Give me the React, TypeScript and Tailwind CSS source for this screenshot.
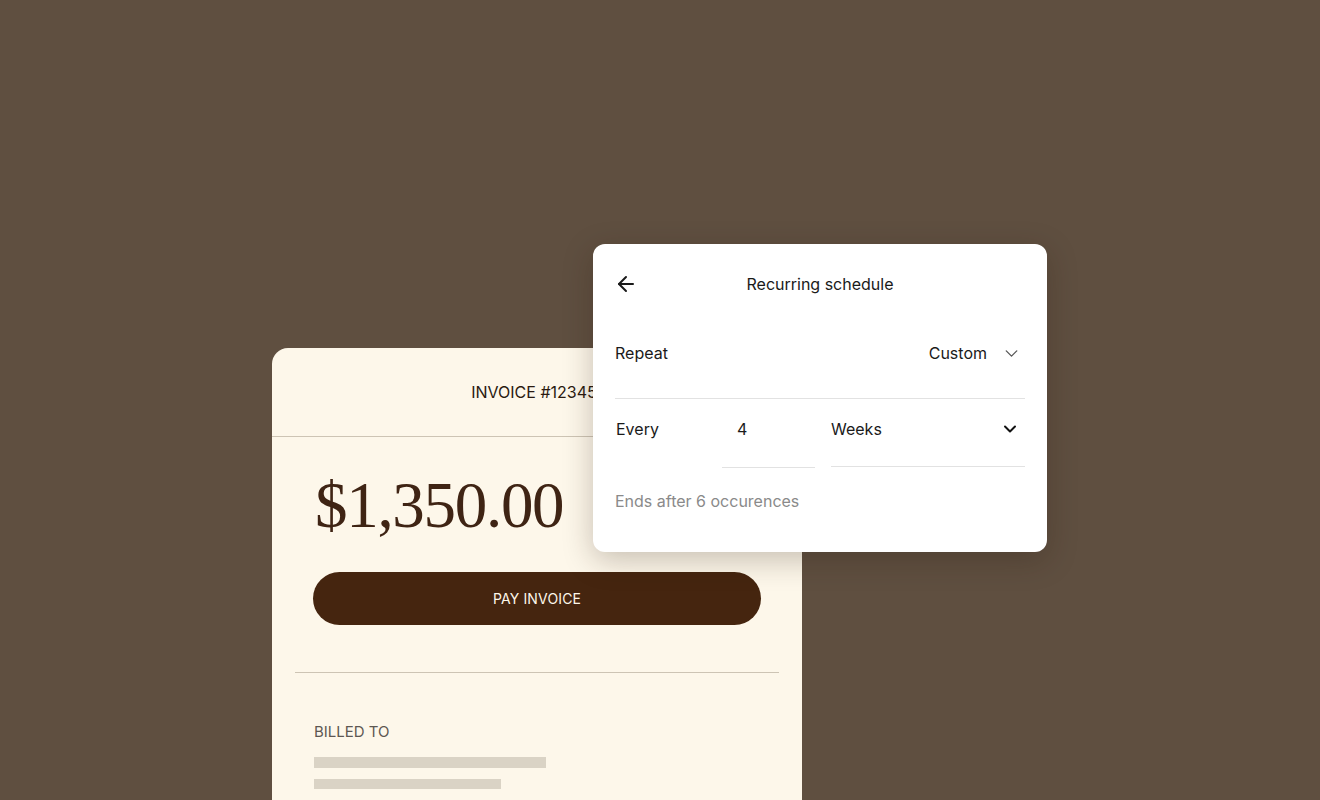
import { ArrowLeft, ChevronDown } from 'lucide-react';

export default function App() {
  return (
    <div className="relative w-[1320px] h-[800px] overflow-hidden bg-[#5f4f40] font-['Inter','Liberation_Sans',sans-serif]">
      {/* invoice card */}
      <div className="pl-[272px] pt-[348px]">
        <div className="w-[530px] h-[452px] rounded-t-2xl bg-[#fdf7ea]">
          <div className="h-[89px] flex items-center justify-center border-b border-[#cdc4b4] text-[16px] text-[#2a1a10] pr-[6px]">
            INVOICE #12345
          </div>
          <div className="px-[41px] pt-[36px]">
            <div className="font-['Liberation_Serif','Times_New_Roman',serif] text-[65px] leading-none tracking-[-0.02em] text-[#3f2414] pl-[2px]">
              $1,350.00
            </div>
            <button className="mt-[34px] w-full h-[53px] rounded-full bg-[#45250f] text-[#fdf7ea] text-[14px] tracking-[0.01em]">
              PAY INVOICE
            </button>
          </div>
          <div className="mx-[23px] mt-[47px] border-t border-[#cdc4b4]" />
          <div className="px-[42px] pt-[49px]">
            <div className="text-[15px] leading-[20px] text-[#5d5752]">BILLED TO</div>
            <div className="mt-[15px] w-[232px] h-[11px] bg-[#dad3c5]" />
            <div className="mt-[11px] w-[187px] h-[10px] bg-[#dad3c5]" />
          </div>
        </div>
      </div>

      {/* recurring schedule popover */}
      <div className="absolute left-[593px] top-[244px] w-[454px] h-[308px] rounded-xl bg-white shadow-[0_8px_30px_rgba(40,25,10,0.25)] px-[22px] pt-[24px] text-[#1a1a1a]">
        <div className="relative h-[32px] flex items-center justify-center">
          <ArrowLeft className="absolute left-[-1px] top-[4px] w-[24px] h-[24px]" strokeWidth={2} />
          <span className="text-[16px]">Recurring schedule</span>
        </div>
        <div className="mt-[41px] h-[24px] flex items-center text-[16px]">
          <span className="flex-1">Repeat</span>
          <span>Custom</span>
          <ChevronDown className="ml-[14px] mr-[3px] w-[21px] h-[21px] text-[#555]" strokeWidth={1.5} />
        </div>
        <div className="mt-[33px] border-t border-[#e2e2e2]" />
        <div className="mt-[18px] flex text-[16px]">
          <div className="w-[107px] h-[24px] flex items-center pl-[1px]">Every</div>
          <div className="w-[93px] h-[51px] pl-[15px] border-b border-[#e2e2e2]">
            <div className="h-[24px] flex items-center">4</div>
          </div>
          <div className="ml-[16px] flex-1 h-[50px] border-b border-[#e2e2e2]">
            <div className="h-[24px] flex items-center">
              <span className="flex-1">Weeks</span>
              <ChevronDown className="mr-[5px] w-[20px] h-[20px] text-[#111]" strokeWidth={2.4} />
            </div>
          </div>
        </div>
        <div className="mt-[21px] h-[24px] flex items-center text-[16px] text-[#8a8a8a]">
          Ends after 6 occurences
        </div>
      </div>
    </div>
  );
}
